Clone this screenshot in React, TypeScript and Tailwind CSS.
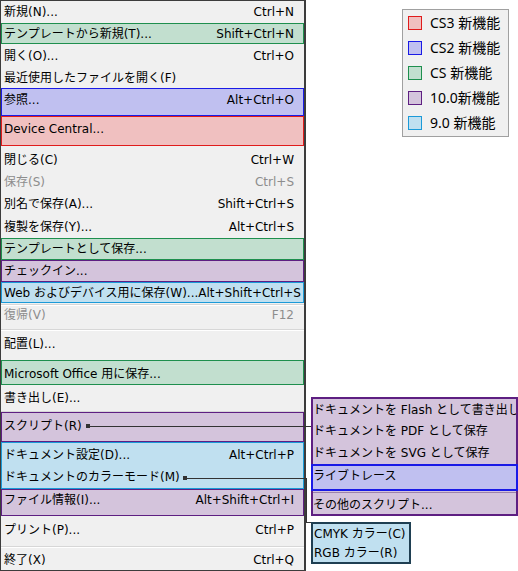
import type { ReactNode } from 'react'

type Tone = 'cs3' | 'cs2' | 'cs' | 'v10' | 'v9'

const TONE: Record<Tone, string> = {
  cs3: 'border-[#e01c1c] bg-[#f0c0c0]',
  cs2: 'border-[#1a1ae6] bg-[#c0c0f0]',
  cs: 'border-[#1e8f4e] bg-[#c2dfcf]',
  v10: 'border-[#5e1f82] bg-[#d4c4dc]',
  v9: 'border-[#1b9ad8] bg-[#c0e0f0]',
}

const LEGEND: { tone: Tone; label: string }[] = [
  { tone: 'cs3', label: 'CS3 新機能' },
  { tone: 'cs2', label: 'CS2 新機能' },
  { tone: 'cs', label: 'CS 新機能' },
  { tone: 'v10', label: '10.0新機能' },
  { tone: 'v9', label: '9.0 新機能' },
]

type RowProps = {
  label: string
  shortcut?: string
  h: string
  disabled?: boolean
  boxed?: boolean
}

function Row({ label, shortcut, h, disabled, boxed }: RowProps) {
  return (
    <div
      className={`flex items-center justify-between whitespace-nowrap text-[12px] leading-none ${h} ${
        boxed ? 'pl-[2px] pr-[9px]' : 'pl-[3px] pr-[10px]'
      } ${disabled ? 'text-[#8d8d8d]' : 'text-black'}`}
    >
      <span>{label}</span>
      {shortcut && <span>{shortcut}</span>}
    </div>
  )
}

function Box({ tone, h, children, className = '' }: { tone: Tone; h: string; children: ReactNode; className?: string }) {
  return <div className={`border ${TONE[tone]} ${h} ${className}`}>{children}</div>
}

function Separator({ h, top }: { h: string; top: string }) {
  return (
    <div className={`${h} ${top}`}>
      <div className="h-px bg-[#d7d7d7]" />
      <div className="h-px bg-white" />
    </div>
  )
}

export default function App() {
  return (
    <div className="relative flex h-[571px] w-[518px] overflow-hidden bg-white font-['DejaVu_Sans','Noto_Sans_CJK_JP',sans-serif]">
      {/* main File menu */}
      <div className="h-[571px] w-[306px] shrink-0 border border-r-2 border-[#3c3c3c] bg-[#f0f0f0]">
        <Row h="h-[22px]" label="新規(N)..." shortcut="Ctrl+N" />
        <Box tone="cs" h="h-[21px]">
          <Row boxed h="h-[19px]" label="テンプレートから新規(T)..." shortcut="Shift+Ctrl+N" />
        </Box>
        <div className="h-px" />
        <Row h="h-[22px]" label="開く(O)..." shortcut="Ctrl+O" />
        <Row h="h-[21px]" label="最近使用したファイルを開く(F)" />
        <Box tone="cs2" h="h-[28px]">
          <Row boxed h="h-[22px]" label="参照..." shortcut="Alt+Ctrl+O" />
        </Box>
        <Box tone="cs3" h="h-[30px]" className="pt-px">
          <Row boxed h="h-[22px]" label="Device Central..." />
        </Box>
        <div className="h-[3px]" />
        <Row h="h-[22px]" label="閉じる(C)" shortcut="Ctrl+W" />
        <Row h="h-[22px]" label="保存(S)" shortcut="Ctrl+S" disabled />
        <Row h="h-[22px]" label="別名で保存(A)..." shortcut="Shift+Ctrl+S" />
        <Row h="h-[23px]" label="複製を保存(Y)..." shortcut="Alt+Ctrl+S" />
        <Box tone="cs" h="h-[22px]">
          <Row boxed h="h-[20px]" label="テンプレートとして保存..." />
        </Box>
        <Box tone="v10" h="h-[22px]">
          <Row boxed h="h-[20px]" label="チェックイン..." />
        </Box>
        <Box tone="v9" h="h-[21px]">
          <div className="flex h-[19px] items-center whitespace-nowrap pl-[2px] text-[12px] leading-none text-black">
            <span>Web およびデバイス用に保存(W)...</span>
            <span>Alt+Shift+Ctrl+S</span>
          </div>
        </Box>
        <Separator h="h-[3px]" top="pt-px" />
        <Row h="h-[18px]" label="復帰(V)" shortcut="F12" disabled />
        <Separator h="h-[9px]" top="pt-[5px]" />
        <Row h="h-[22px]" label="配置(L)..." />
        <div className="h-[5px]" />
        <Box tone="cs" h="h-[25px]" className="pt-[3px]">
          <Row boxed h="h-[20px]" label="Microsoft Office 用に保存..." />
        </Box>
        <Row h="h-[26px]" label="書き出し(E)..." />
        <div className="h-px bg-[#d7d7d7]" />
        <Box tone="v10" h="h-[30px]" className="pt-[2px]">
          <Row boxed h="h-[22px]" label="スクリプト(R)" />
        </Box>
        <Box tone="v9" h="h-[47px]" className="pt-px">
          <Row boxed h="h-[22px]" label="ドキュメント設定(D)..." shortcut="Alt+Ctrl+P" />
          <Row boxed h="h-[22px]" label="ドキュメントのカラーモード(M)" />
        </Box>
        <Box tone="v10" h="h-[27px]">
          <Row boxed h="h-[20px]" label="ファイル情報(I)..." shortcut="Alt+Shift+Ctrl+I" />
        </Box>
        <div className="h-[3px]" />
        <Row h="h-[22px]" label="プリント(P)..." shortcut="Ctrl+P" />
        <Separator h="h-[9px]" top="pt-[5px]" />
        <Row h="h-[20px]" label="終了(X)" shortcut="Ctrl+Q" />
      </div>

      {/* legend */}
      <div className="ml-[96px] mt-[9px] h-[128px] w-[107px] self-start border border-[#a0a0a0] bg-[#f0f0f0] pl-[5px] font-['Noto_Sans','Noto_Sans_CJK_JP',sans-serif]">
        {LEGEND.map((item) => (
          <div key={item.tone} className="flex h-[25px] items-center gap-[8px]">
            <span className={`h-[14px] w-[14px] border ${TONE[item.tone]}`} />
            <span className="whitespace-nowrap text-[14px] leading-none text-black">{item.label}</span>
          </div>
        ))}
      </div>

      {/* connector: スクリプト -> submenu */}
      <div className="absolute left-[86px] top-[424px] h-[4px] w-[4px] bg-[#333]" />
      <div className="absolute left-[90px] top-[426px] h-px w-[221px] bg-[#333]" />

      {/* connector: カラーモード -> submenu */}
      <div className="absolute left-[183px] top-[476px] h-[4px] w-[4px] bg-[#333]" />
      <div className="absolute left-[187px] top-[478px] h-px w-[120px] bg-[#333]" />
      <div className="absolute left-[306px] top-[478px] h-[45px] w-px bg-[#333]" />
      <div className="absolute left-[306px] top-[522px] h-px w-[5px] bg-[#333]" />

      {/* scripts submenu */}
      <div className="absolute left-[311px] top-[397px] h-[119px] w-[207px] border-2 border-[#5e1f82] bg-[#d4c4dc] text-[12px] leading-none text-black">
        <div className="overflow-hidden whitespace-nowrap">
          <div className="flex h-[21px] items-center">ドキュメントを Flash として書き出し</div>
          <div className="flex h-[22px] items-center">ドキュメントを PDF として保存</div>
          <div className="flex h-[22px] items-center">ドキュメントを SVG として保存</div>
        </div>
        <div className="-mx-[2px] flex h-[27px] items-start border-2 border-[#1a1ae6] bg-[#c0c0f0] pt-[1px]">
          <div className="flex h-[17px] items-center">ライブトレース</div>
        </div>
        <div className="h-[4px] pt-px">
          <div className="h-px bg-[#9d83ab]" />
        </div>
        <div className="flex h-[19px] items-center whitespace-nowrap">その他のスクリプト...</div>
      </div>

      {/* color mode submenu */}
      <div className="absolute left-[311px] top-[522px] h-[42px] w-[100px] border-2 border-[#1f3f52] bg-[#c0e0f0] pl-[1px] text-[12px] leading-none text-black">
        <div className="flex h-[19px] items-center whitespace-nowrap">CMYK カラー(C)</div>
        <div className="flex h-[19px] items-center whitespace-nowrap">RGB カラー(R)</div>
      </div>
    </div>
  )
}
